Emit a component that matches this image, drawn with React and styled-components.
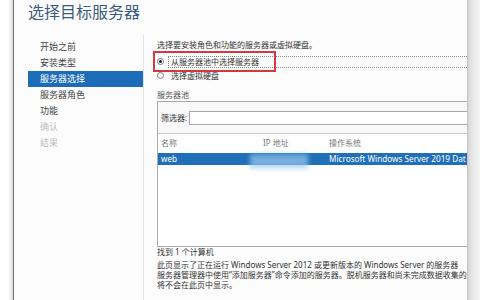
import React from "react";
import styled, { createGlobalStyle } from "styled-components";

const GlobalStyle = createGlobalStyle`
  html, body {
    margin: 0;
    padding: 0;
    background: #fff;
  }
  body {
    width: 480px;
    height: 300px;
    overflow: hidden;
    font-family: "Noto Sans", "Noto Sans CJK SC", sans-serif;
    color: #333;
  }
`;

const Screen = styled.div`
  display: flex;
  width: 480px;
  height: 300px;
  background: #fff;
`;

const LeftEdge = styled.div`
  width: 13px;
  flex-shrink: 0;
  background: linear-gradient(to right, #fff 0, #fff 8px, #e6e6e6 12px, #d0d0d0 13px);
`;

const Window = styled.div`
  width: 453px;
  flex-shrink: 0;
  border-left: 1px solid #707070;
  border-right: 1px solid #c4c4c4;
  background: #fcfcfc;
  overflow: hidden;
  display: flex;
  flex-direction: column;
`;

const RightEdge = styled.div`
  flex: 1;
  background: linear-gradient(to right, #d6d6d6, #eaeaea 5px, #f4f4f4);
`;

const Title = styled.div`
  height: 35px;
  flex-shrink: 0;
  padding-left: 14px;
  font-size: 16px;
  line-height: 24px;
  color: #3a5b7e;
  white-space: nowrap;
`;

const Body = styled.div`
  flex: 1;
  display: flex;
  min-height: 0;
`;

const Nav = styled.div`
  width: 130px;
  flex-shrink: 0;
  box-sizing: border-box;
  border-right: 1px solid #e2e2e2;
  padding-top: 4px;
  display: flex;
  flex-direction: column;
`;

const NavItem = styled.div`
  height: 16px;
  line-height: 16px;
  margin-left: 14px;
  padding-left: 12px;
  font-size: 9px;
  white-space: nowrap;
  color: ${({ $active, $disabled }) =>
    $active ? "#fff" : $disabled ? "#bdbdbd" : "#444"};
  background: ${({ $active }) => ($active ? "#1c6cb8" : "transparent")};
`;

const Content = styled.div`
  flex: 1;
  min-width: 0;
  padding: 4px 0 0 13px;
  font-size: 8px;
  display: flex;
  flex-direction: column;
`;

const Line = styled.div`
  line-height: ${({ $lh }) => $lh || 12}px;
  margin-top: ${({ $mt }) => $mt || 0}px;
  white-space: nowrap;
  color: ${({ $muted }) => ($muted ? "#555" : "#333")};
`;

const RadioGroup = styled.div`
  position: relative;
  padding-top: 5px;
  display: flex;
  flex-direction: column;
  gap: 3px;
`;

const RadioRow = styled.div`
  display: flex;
  align-items: center;
  height: 11px;
  white-space: nowrap;
`;

const Radio = styled.span`
  width: 7px;
  height: 7px;
  box-sizing: border-box;
  border-radius: 50%;
  border: 1px solid #7a7a7a;
  background: #fff;
  display: flex;
  align-items: center;
  justify-content: center;
  flex-shrink: 0;
  &::after {
    content: "";
    width: 3px;
    height: 3px;
    border-radius: 50%;
    background: ${({ $checked }) => ($checked ? "#222" : "transparent")};
  }
`;

const RadioLabel = styled.span`
  margin-left: 4px;
  padding-left: 2px;
  height: 10px;
  line-height: 10px;
  flex: 1;
  border: 1px dotted ${({ $focus }) => ($focus ? "#8a8a8a" : "transparent")};
  border-right: none;
`;

const Callout = styled.div`
  position: absolute;
  left: -4px;
  top: 0;
  width: 123px;
  height: 21px;
  box-sizing: border-box;
  border: 2px solid #d23a3f;
  pointer-events: none;
`;

const PoolBox = styled.div`
  width: 340px;
  height: 146px;
  flex-shrink: 0;
  box-sizing: border-box;
  border: 1px solid #ababab;
  background: #fff;
  display: flex;
  flex-direction: column;
`;

const FilterBar = styled.div`
  height: 32px;
  box-sizing: border-box;
  border-bottom: 1px solid #c8c8c8;
  background: #f9f9f9;
  display: flex;
  align-items: center;
  padding-left: 3px;
  white-space: nowrap;
`;

const FilterInput = styled.div`
  flex: 1;
  height: 14px;
  margin-left: 2px;
  box-sizing: border-box;
  border: 1px solid #a8a8a8;
  background: #fff;
`;

const TableRow = styled.div`
  position: relative;
  display: grid;
  grid-template-columns: 102px 66px 1fr;
  padding-left: 3px;
  height: ${({ $h }) => $h}px;
  line-height: ${({ $h }) => $h}px;
  margin-top: ${({ $mt }) => $mt || 0}px;
  white-space: nowrap;
  font-size: ${({ $selected }) => ($selected ? 8.2 : 8)}px;
  color: ${({ $selected }) => ($selected ? "#fff" : "#777")};
  background: ${({ $selected }) => ($selected ? "#1f6fb9" : "transparent")};
`;

const BlurPatch = styled.div`
  position: absolute;
  left: 92px;
  top: 1px;
  width: 58px;
  height: 14px;
  background: rgba(150, 195, 235, 0.75);
  filter: blur(2.5px);
`;

const Footer = styled.div`
  display: flex;
  flex-direction: column;
`;

export default function App() {
  const steps = [
    { label: "开始之前" },
    { label: "安装类型" },
    { label: "服务器选择", active: true },
    { label: "服务器角色" },
    { label: "功能" },
    { label: "确认", disabled: true },
    { label: "结果", disabled: true },
  ];

  return (
    <>
      <GlobalStyle />
      <Screen>
        <LeftEdge />
        <Window>
          <Title>选择目标服务器</Title>
          <Body>
            <Nav>
              {steps.map((s) => (
                <NavItem key={s.label} $active={s.active} $disabled={s.disabled}>
                  {s.label}
                </NavItem>
              ))}
            </Nav>
            <Content>
              <Line>选择要安装角色和功能的服务器或虚拟硬盘。</Line>
              <RadioGroup>
                <RadioRow>
                  <Radio $checked />
                  <RadioLabel $focus>从服务器池中选择服务器</RadioLabel>
                </RadioRow>
                <RadioRow>
                  <Radio />
                  <RadioLabel>选择虚拟硬盘</RadioLabel>
                </RadioRow>
                <Callout />
              </RadioGroup>
              <Line $mt={8} $muted>服务器池</Line>
              <PoolBox>
                <FilterBar>
                  筛选器:
                  <FilterInput />
                </FilterBar>
                <TableRow $h={17}>
                  <span>名称</span>
                  <span>IP 地址</span>
                  <span>操作系统</span>
                </TableRow>
                <TableRow $h={12} $mt={2} $selected>
                  <span>web</span>
                  <span />
                  <span>Microsoft Windows Server 2019 Dat</span>
                  <BlurPatch />
                </TableRow>
              </PoolBox>
              <Footer>
                <Line $lh={10}>找到 1 个计算机</Line>
                <Line $lh={10} $mt={3}>
                  此页显示了正在运行 Windows Server 2012 或更新版本的 Windows Server 的服务器
                </Line>
                <Line $lh={10}>
                  服务器管理器中使用“添加服务器”命令添加的服务器。脱机服务器和尚未完成数据收集的
                </Line>
                <Line $lh={10}>将不会在此页中显示。</Line>
              </Footer>
            </Content>
          </Body>
        </Window>
        <RightEdge />
      </Screen>
    </>
  );
}
